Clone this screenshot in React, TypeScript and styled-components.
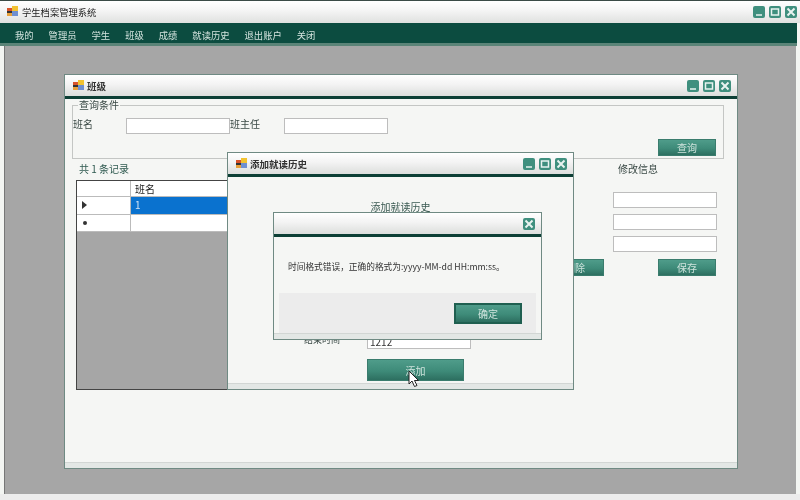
import React from 'react';
import styled, { createGlobalStyle } from 'styled-components';

const GlobalStyle = createGlobalStyle`
  html, body { margin: 0; padding: 0; background: #efefef; }
  * { box-sizing: border-box; }
  body { font-family: "Noto Sans CJK SC", "Liberation Sans", sans-serif; }
`;

function Logo() {
  return (
    <svg width="11" height="11" viewBox="0 0 11 11">
      <rect x="0" y="2" width="5" height="3" fill="#d9532b" />
      <rect x="0" y="5" width="5" height="2" fill="#333" />
      <rect x="0" y="7" width="5" height="3" fill="#e8a13a" />
      <rect x="5" y="0" width="6" height="5" fill="#f2c230" />
      <rect x="5" y="5" width="6" height="5" fill="#6f8fd0" />
    </svg>
  );
}

function CtlGlyph({ kind }: { kind: string }) {
  return (
    <svg width="12" height="12" viewBox="0 0 12 12" fill="none" stroke="#e8f3f0" strokeWidth="1.5">
      {kind === 'min' && <path d="M3 9 H9" />}
      {kind === 'max' && <rect x="2.5" y="3" width="7" height="6" />}
      {kind === 'close' && <path d="M2.5 2.5 L9.5 9.5 M9.5 2.5 L2.5 9.5" strokeWidth="2" />}
    </svg>
  );
}

function Controls({ only }: { only?: string }) {
  const kinds = only ? [only] : ['min', 'max', 'close'];
  return (
    <CtlGroup>
      {kinds.map(k => <CtlBtn key={k}><CtlGlyph kind={k} /></CtlBtn>)}
    </CtlGroup>
  );
}

export default function App() {
  return (
    <Screen>
      <GlobalStyle />
      <TopBar>
        <Logo />
        <AppTitle>学生档案管理系统</AppTitle>
        <Controls />
      </TopBar>
      <MenuBar>
        {['我的', '管理员', '学生', '班级', '成绩', '就读历史', '退出账户', '关闭'].map(m => (
          <MenuItem key={m}>{m}</MenuItem>
        ))}
      </MenuBar>
      <Desktop>
        <Win $left={59} $top={28} $width={674} $height={395}>
          <WinTitle>
            <Logo />
            <WinName>班级</WinName>
            <Controls />
          </WinTitle>
          <ClassBody>
            <QueryBox>
              <legend>查询条件</legend>
              <QueryFields>
                <FieldLabel $width={53}>班名</FieldLabel>
                <TextInput $width={104} />
                <FieldLabel $width={54}>班主任</FieldLabel>
                <TextInput $width={104} />
              </QueryFields>
              <QueryAction><ActionBtn>查询</ActionBtn></QueryAction>
            </QueryBox>
            <LowerPart>
              <ListCol>
                <Caption>共 1 条记录</Caption>
                <DataGrid>
                  <GridRow $header>
                    <RowHead />
                    <Cell>班名</Cell>
                  </GridRow>
                  <GridRow>
                    <RowHead>
                      <svg width="5" height="8" viewBox="0 0 5 8"><path d="M0 0 L5 4 L0 8 Z" fill="#333" /></svg>
                    </RowHead>
                    <Cell $selected>1</Cell>
                  </GridRow>
                  <GridRow>
                    <RowHead><Dot /></RowHead>
                    <Cell />
                  </GridRow>
                </DataGrid>
              </ListCol>
              <EditCol>
                <EditTitle>修改信息</EditTitle>
                <EditInputs>
                  <TextInput $width={104} />
                  <TextInput $width={104} />
                  <TextInput $width={104} />
                </EditInputs>
                <EditActions>
                  <ActionBtn>删除</ActionBtn>
                  <ActionBtn>保存</ActionBtn>
                </EditActions>
              </EditCol>
            </LowerPart>
          </ClassBody>
          <WinFoot />
        </Win>

        <Win $left={222} $top={106} $width={347} $height={238}>
          <WinTitle>
            <Logo />
            <WinName>添加就读历史</WinName>
            <Controls />
          </WinTitle>
          <AddBody>
            <AddHeading>添加就读历史</AddHeading>
            <AddRow>
              <AddLabel>结束时间</AddLabel>
              <TextInput $width={104} defaultValue="1212" />
            </AddRow>
            <WideBtn>添加</WideBtn>
          </AddBody>
          <WinFoot />
        </Win>

        <Win $left={268} $top={166} $width={269} $height={128}>
          <WinTitle>
            <Controls only="close" />
          </WinTitle>
          <MsgBody>
            <MsgText>时间格式错误，正确的格式为:yyyy-MM-dd HH:mm:ss。</MsgText>
            <MsgPanel>
              <OkBtn>确定</OkBtn>
            </MsgPanel>
          </MsgBody>
          <WinFoot />
        </Win>

        <Pointer width="12" height="18" viewBox="0 0 12 18">
          <path d="M1 1 L1 14 L4 11 L6.5 16.5 L9 15.5 L6.5 10.5 L10.5 10.5 Z" fill="#fff" stroke="#222" strokeWidth="1" />
        </Pointer>
      </Desktop>
      <BottomEdge />
    </Screen>
  );
}

const Screen = styled.div`
  width: 800px;
  height: 500px;
  overflow: hidden;
  display: flex;
  flex-direction: column;
  background: #f3f5f2;
  filter: blur(0.3px);
`;

const TopBar = styled.div`
  height: 23px;
  flex: none;
  display: flex;
  align-items: center;
  gap: 4px;
  padding: 0 3px 1px 7px;
  border-top: 1px solid #3a4a46;
  background: linear-gradient(#ffffff, #f4f4f4 45%, #dfe1df);
`;

const AppTitle = styled.div`
  flex: 1;
  font-size: 9.3px;
  color: #222;
`;

const CtlGroup = styled.div`
  display: flex;
  gap: 4px;
  margin-left: auto;
`;

const CtlBtn = styled.div`
  width: 12px;
  height: 12px;
  border-radius: 2px;
  background: #3f8f7e;
  display: flex;
`;

const MenuBar = styled.div`
  height: 23px;
  flex: none;
  margin-right: 3px;
  display: flex;
  align-items: center;
  gap: 15px;
  padding: 4px 0 0 15px;
  background: #0c4c40;
  border-bottom: 3px solid #5b8478;
`;

const MenuItem = styled.div`
  font-size: 9.3px;
  color: #d4e4df;
`;

const Desktop = styled.div`
  position: relative;
  flex: 1;
  margin: 0 4px 0 4px;
  background: #a6a6a6;
  border-left: 1px solid #777;
`;

const BottomEdge = styled.div`
  height: 6px;
  flex: none;
  background: #ececec;
`;

const Win = styled.div<{ $left: number; $top: number; $width: number; $height: number }>`
  position: absolute;
  left: ${p => p.$left}px;
  top: ${p => p.$top}px;
  width: ${p => p.$width}px;
  height: ${p => p.$height}px;
  display: flex;
  flex-direction: column;
  background: #f5f6f4;
  border: 1px solid #6f8a83;
`;

const WinTitle = styled.div`
  height: 24px;
  flex: none;
  display: flex;
  align-items: center;
  gap: 3px;
  padding: 0 6px 0 8px;
  background: linear-gradient(#ffffff, #f3f3f3 45%, #dcdedc);
  border-bottom: 3px solid #0c3f35;
`;

const WinName = styled.div`
  font-size: 9.5px;
  font-weight: 700;
  color: #333;
`;

const WinFoot = styled.div`
  height: 6px;
  flex: none;
  background: #e3e7e5;
  border-top: 1px solid #d2d6d4;
`;

const ClassBody = styled.div`
  flex: 1;
  display: flex;
  flex-direction: column;
  padding: 0 13px 0 7px;
`;

const QueryBox = styled.fieldset`
  margin: 0;
  padding: 0;
  height: 60px;
  border: 1px solid #c4c6c4;
  display: flex;
  flex-direction: column;
  legend {
    margin-left: 5px;
    padding: 0 1px;
    font-size: 10px;
    line-height: 12px;
    color: #3b4a46;
  }
`;

const QueryFields = styled.div`
  display: flex;
  align-items: center;
  margin-top: 7px;
`;

const FieldLabel = styled.div<{ $width: number }>`
  width: ${p => p.$width}px;
  flex: none;
  font-size: 10px;
  color: #3b4a46;
  position: relative;
  top: -3px;
`;

const TextInput = styled.input<{ $width: number }>`
  width: ${p => p.$width}px;
  height: 16px;
  flex: none;
  padding: 0 2px;
  background: #fff;
  border: 1px solid #bdbdbd;
  font-family: inherit;
  font-size: 10px;
  color: #333;
  outline: none;
`;

const QueryAction = styled.div`
  display: flex;
  justify-content: flex-end;
  padding: 5px 7px 0 0;
`;

const ActionBtn = styled.div`
  width: 58px;
  height: 17px;
  display: flex;
  align-items: center;
  justify-content: center;
  font-size: 10px;
  color: #cfe4dd;
  background: linear-gradient(#4f9c8a, #3e8b79 55%, #2d6f60);
  border: 1px solid #3a7c6d;
`;

const LowerPart = styled.div`
  flex: 1;
  display: flex;
  padding-left: 4px;
`;

const ListCol = styled.div`
  width: 464px;
  flex: none;
  display: flex;
  flex-direction: column;
`;

const Caption = styled.div`
  height: 21px;
  padding: 3px 0 0 3px;
  font-size: 10px;
  line-height: 14px;
  color: #2f5a50;
`;

const DataGrid = styled.div`
  height: 210px;
  background: #a6a6a6;
  border: 1px solid #444;
`;

const GridRow = styled.div<{ $header?: boolean }>`
  height: ${p => (p.$header ? 16 : 17.5)}px;
  display: grid;
  grid-template-columns: 54px 1fr;
  background: #fff;
  border-bottom: 1px solid #bbb;
`;

const RowHead = styled.div`
  display: flex;
  align-items: center;
  padding-left: 5px;
  border-right: 1px solid #bbb;
`;

const Dot = styled.span`
  width: 4px;
  height: 4px;
  margin-left: 1px;
  border-radius: 50%;
  background: #333;
`;

const Cell = styled.div<{ $selected?: boolean }>`
  padding-left: 4px;
  font-size: 10px;
  line-height: 15px;
  color: ${p => (p.$selected ? '#cfe2f5' : '#222')};
  background: ${p => (p.$selected ? '#0a72cf' : 'transparent')};
`;

const EditCol = styled.div`
  flex: 1;
  display: flex;
  flex-direction: column;
  padding: 0 6px 0 6px;
`;

const EditTitle = styled.div`
  height: 33px;
  padding: 3px 0 0 72px;
  font-size: 10px;
  line-height: 14px;
  color: #3b4a46;
`;

const EditInputs = styled.div`
  display: flex;
  flex-direction: column;
  align-items: flex-end;
  gap: 6px;
  margin-right: 1px;
`;

const EditActions = styled.div`
  display: flex;
  justify-content: space-between;
  margin: 7px 2px 0 0;
`;

const AddBody = styled.div`
  flex: 1;
  display: flex;
  flex-direction: column;
  align-items: flex-start;
`;

const AddHeading = styled.div`
  width: 100%;
  margin-top: 23px;
  text-align: center;
  font-size: 10px;
  line-height: 14px;
  color: #3b5a52;
`;

const AddRow = styled.div`
  display: flex;
  align-items: center;
  margin: 119px 0 0 76px;
  gap: 27px;
`;

const AddLabel = styled.div`
  width: 36px;
  font-size: 9px;
  color: #3b4a46;
  position: relative;
  top: -2px;
`;

const WideBtn = styled(ActionBtn)`
  width: 97px;
  height: 22px;
  margin: 10px 0 0 139px;
`;

const MsgBody = styled.div`
  flex: 1;
  display: flex;
  flex-direction: column;
  padding: 0 5px;
`;

const MsgText = styled.div`
  height: 56px;
  padding: 23px 0 0 9px;
  font-size: 8.7px;
  line-height: 14px;
  color: #333;
`;

const MsgPanel = styled.div`
  height: 40px;
  display: flex;
  align-items: center;
  justify-content: flex-end;
  padding: 0 14px 0 0;
  background: #ececec;
`;

const OkBtn = styled(ActionBtn)`
  width: 68px;
  height: 21px;
  border: 2px solid #1f5f50;
`;

const Pointer = styled.svg`
  position: absolute;
  left: 403px;
  top: 324px;
`;
